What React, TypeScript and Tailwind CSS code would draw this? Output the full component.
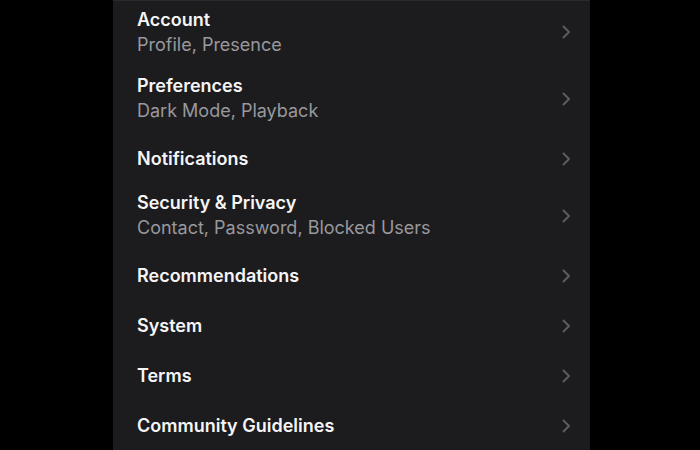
import React from "react";

type Item = { title: string; subtitle?: string };

const ITEMS: Item[] = [
  { title: "Account", subtitle: "Profile, Presence" },
  { title: "Preferences", subtitle: "Dark Mode, Playback" },
  { title: "Notifications" },
  { title: "Security & Privacy", subtitle: "Contact, Password, Blocked Users" },
  { title: "Recommendations" },
  { title: "System" },
  { title: "Terms" },
  { title: "Community Guidelines" },
];

function Chevron() {
  return (
    <svg width="9" height="14" viewBox="0 0 9 14" fill="none" className="shrink-0">
      <polyline
        points="1.5,1.5 7,7 1.5,12.5"
        stroke="#5c5c60"
        strokeWidth="2"
        strokeLinecap="round"
        strokeLinejoin="round"
      />
    </svg>
  );
}

export default function App() {
  return (
    <div className="w-[700px] h-[450px] bg-black overflow-hidden pl-[113px] font-['Inter','Liberation_Sans',sans-serif]">
      <div className="w-[477px] h-[450px] bg-[#1c1c1e] border-t border-[#2a2a2c] flex flex-col">
        {ITEMS.map((item, i) => (
          <div
            key={item.title}
            className={`flex items-center justify-between pl-[24px] pr-[19px] shrink-0 ${
              item.subtitle ? (i === 0 ? "h-[66px] pb-[4px]" : "h-[67px] pb-[4px]") : "h-[50px]"
            }`}
          >
            <div className="flex flex-col">
              <span className="text-[18px] leading-[24px] font-semibold text-[#f5f5f7]">
                {item.title}
              </span>
              {item.subtitle && (
                <span className="text-[18px] leading-[24px] text-[#98989d] mt-[1px]">
                  {item.subtitle}
                </span>
              )}
            </div>
            <Chevron />
          </div>
        ))}
        <div className="flex-1" />
        <div className="h-[3px] bg-[#262628] shrink-0" />
      </div>
    </div>
  );
}
